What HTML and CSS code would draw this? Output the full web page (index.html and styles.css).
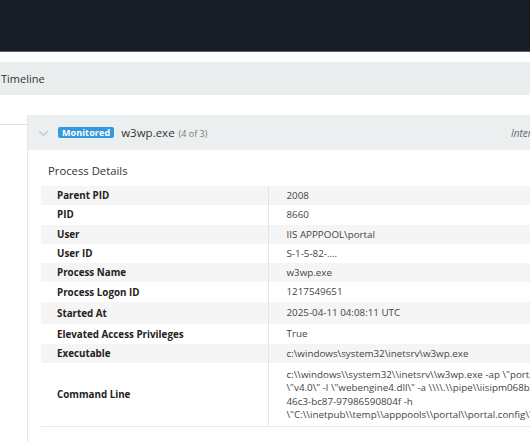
FILE: index.html
```html
<!DOCTYPE html>
<html>
<head>
<meta charset="utf-8">
<link rel="stylesheet" href="styles.css">
</head>
<body>
<div class="topbar"></div>
<div class="page">
  <div class="section-bar">Timeline</div>
  <div class="timeline">
    <div class="connector"></div>
    <div class="card">
      <div class="card-head">
        <svg class="chevron" width="11" height="7" viewBox="0 0 11 7"><path d="M1 1 L5.5 5.5 L10 1" fill="none" stroke="#c9cdd1" stroke-width="1.6"/></svg>
        <span class="badge">Monitored</span>
        <span class="proc">w3wp.exe</span>
        <span class="count">(4 of 3)</span>
        <span class="meta">Interactive</span>
      </div>
      <div class="card-body">
        <div class="title">Process Details</div>
        <table class="details">
          <colgroup><col class="c-label"><col class="c-value"></colgroup>
          <tr><th>Parent PID</th><td>2008</td></tr>
          <tr><th>PID</th><td>8660</td></tr>
          <tr><th>User</th><td>IIS APPPOOL\portal</td></tr>
          <tr><th>User ID</th><td>S-1-5-82-....</td></tr>
          <tr><th>Process Name</th><td>w3wp.exe</td></tr>
          <tr><th>Process Logon ID</th><td>1217549651</td></tr>
          <tr class="tall"><th>Started At</th><td>2025-04-11 04:08:11 UTC</td></tr>
          <tr><th>Elevated Access Privileges</th><td>True</td></tr>
          <tr><th>Executable</th><td>c:\windows\system32\inetsrv\w3wp.exe</td></tr>
          <tr class="cmd"><th>Command Line</th><td>c:\\windows\\system32\\inetsrv\\w3wp.exe -ap \"portal\" -v \"v4.0\" -l \"webengine4.dll\" -a \\\\.\\pipe\\iisipm068b2f4e-0a3b-46c3-bc87-97986590804f -h \"C:\\inetpub\\temp\\apppools\\portal\\portal.config\"</td></tr>
        </table>
      </div>
    </div>
  </div>
</div>
</body>
</html>
```

FILE: styles.css
```css
html, body {
  margin: 0;
  padding: 0;
  overflow: hidden;
  background: #ffffff;
  font-family: "Open Sans", "Noto Sans", sans-serif;
  color: #333;
}
body {
  width: 530px;
  height: 442px;
}
.topbar {
  height: 51px;
  background: #171d25;
  border-bottom: 1px solid #5b6067;
}
.page {
  width: 700px;
  padding-top: 10px;
}
.section-bar {
  height: 33px;
  background: #ebeeef;
  font-size: 11px;
  line-height: 34px;
  padding-left: 1px;
  color: #333;
}
.timeline {
  position: relative;
  padding: 20px 0 0 27px;
}
.connector {
  position: absolute;
  left: 0;
  top: 29px;
  width: 27px;
  height: 1px;
  background: #dfe2e5;
}
.card {
  border-left: 1px solid #e4e7e9;
  min-height: 330px;
}
.card-head {
  height: 35px;
  background: #eceff0;
  display: flex;
  align-items: center;
  padding-left: 10px;
  position: relative;
}
.chevron {
  margin-right: 9px;
  margin-top: 1px;
}
.badge {
  background: #3399dd;
  color: #fff;
  font-weight: 700;
  font-size: 9px;
  line-height: 11px;
  padding: 0 4px;
  border-radius: 2px;
  letter-spacing: 0.1px;
}
.proc {
  font-size: 11.5px;
  color: #333;
  margin-left: 7px;
}
.count {
  font-size: 9px;
  color: #777;
  margin-left: 4px;
  margin-top: 1px;
}
.meta {
  position: absolute;
  left: 483px;
  font-size: 10px;
  font-style: italic;
  color: #666;
}
.card-body {
  padding: 10px 0 0 13px;
}
.title {
  font-size: 11.3px;
  color: #333;
  padding-left: 7px;
  height: 26px;
  line-height: 21px;
}
.details {
  border-collapse: collapse;
  table-layout: fixed;
  width: 563px;
  font-size: 9.8px;
  border-bottom: 1px solid #e8e8e8;
}
.c-label { width: 227px; }
.details th {
  text-align: left;
  font-weight: 700;
  color: #222;
  padding: 0 0 0 16px;
  height: 19.3px;
  border-right: 1px solid #e4e4e4;
  vertical-align: middle;
}
.details td {
  padding: 0 18px;
  color: #444;
  height: 19.3px;
  line-height: 13.3px;
  vertical-align: middle;
}
.details tr:nth-child(odd) {
  background: #f5f5f5;
}
.details tr.tall th, .details tr.tall td {
  height: 22.7px;
}
.details tr.cmd td {
  padding-top: 5px;
  padding-bottom: 5px;
}
```
